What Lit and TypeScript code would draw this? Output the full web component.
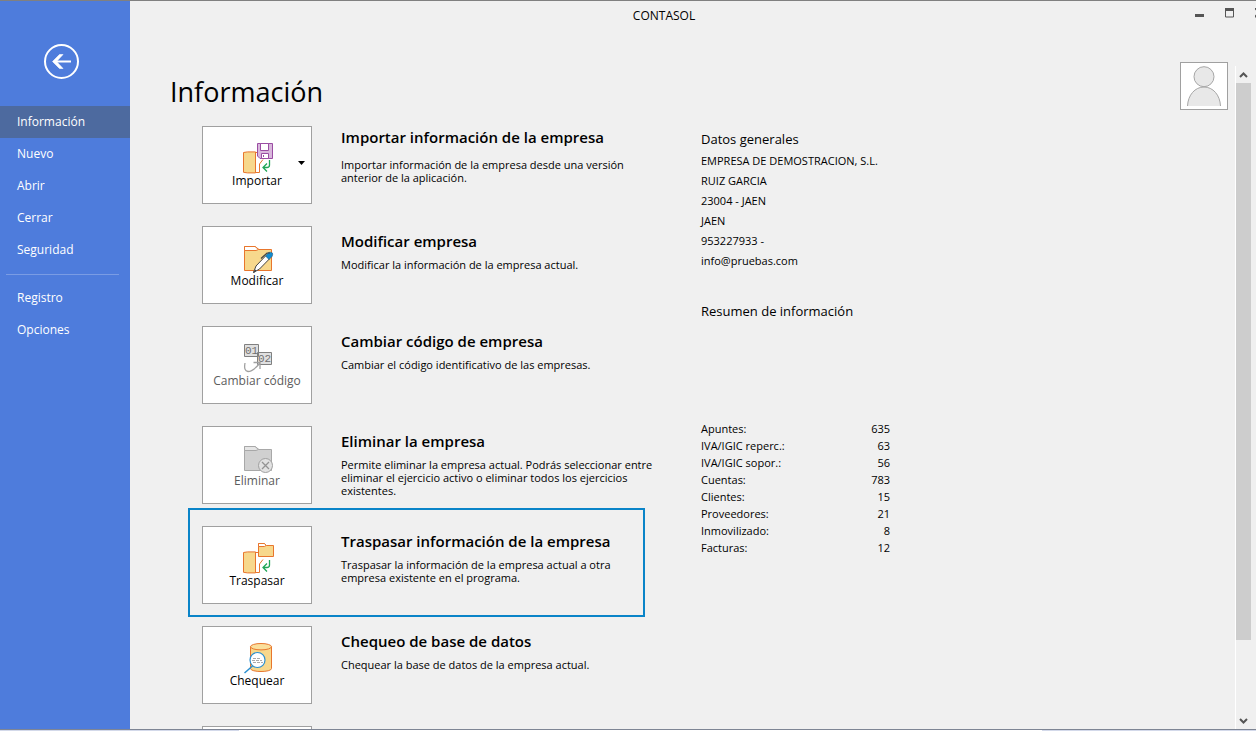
import { LitElement, html, svg, css, nothing } from "lit";
import { customElement, property } from "lit/decorators.js";

const folder = (fill: string, tab: string, line: string) => svg`
  <path d="M3.5 28.5V4.5H14l4 3h12.500v21z" fill=${fill} stroke=${line} />
  <path d="M3.500 8.500V4.500H14l3.500 3L15 8.500z" fill=${tab} stroke=${line} />`;

const book = svg`
  <path d="M14.500 10.500H18M14.500 30.500h4V22l3.500-4.500" fill="none" stroke="#e8762d" />
  <path d="M2.500 10.500l4-.6h8v21h-8l-4-.6z" fill="#f7d88c" stroke="#e8762d" />
  <path d="M28.500 18v5q0 2.500-2.500 2.500h-3.500M26 21.500l-4 4 4 4" fill="none" stroke="#21a657" stroke-width="1.300" />`;

const icons: Record<string, unknown> = {
  importar: svg`${book}
    <path d="M16.500 1.500h15v15H19l-2.500-2.500z" fill="#d9b8dc" stroke="#9a4da3" />
    <path d="M19.500 1.500h8v7h-8zM20.500 16.500v-5h7v5z" fill="#fff" stroke="#9a4da3" />
    <path d="M22.500 13v2" stroke="#9a4da3" />`,
  modificar: svg`${folder("#f7d88c", "#fff", "#e8762d")}
    <path d="M12.500 30.500l2.500-6.500L25 13.500l3.500 3.300L18.500 27z" fill="#fff" stroke="#444" />
    <path d="M24.500 14l3-3.500q2-.8 4 .5.500 2-.5 3.500l-3 3z" fill="#0f8bd0" stroke="#2c5f80" stroke-width=".6" />
    <path d="M20 16.500l6-5.500h3M12.500 30.500l2.500-2.500" fill="none" stroke="#444" stroke-width="1.200" />`,
  cambiar: svg`
    <path d="M3.500 2.500h14v12h-14zM16.500 10.500h14v12h-14z" fill="#e0e0e0" stroke="#808080" />
    <text class="digits" x="4" y="12">01</text>
    <text class="digits" x="17" y="20">02</text>
    <path d="M4 21q-1.500 8 3 8.500 5 0 11.500-8M12.500 20.500h6.500v6.500" fill="none" stroke="#a0a0a0" stroke-width="1.300" />`,
  eliminar: svg`${folder("#d0d0d0", "#e6e6e6", "#a8a8a8")}
    <circle cx="24.500" cy="23.500" r="7" fill="#e2e2e2" stroke="#a0a0a0" />
    <path d="M21 20l7 7M28 20l-7 7" stroke="#949494" stroke-width="1.300" />`,
  traspasar: svg`${book}
    <path d="M17.500 14.500v-13h6l2 2h7v11z" fill="#f7d88c" stroke="#e8762d" />
    <path d="M17.500 4.500v-3h6l1.500 2-1.500 1z" fill="#fff" stroke="#e8762d" />`,
  chequear: svg`
    <path d="M9.500 4.500v22c0 4 21 4 21 0v-22" fill="#f7d88c" stroke="#e8762d" />
    <ellipse cx="20" cy="4.700" rx="10.500" ry="3.200" fill="#fadf9c" stroke="#e8762d" />
    <path d="M11.500 24l-8 7" stroke="#2a8fd0" stroke-width="1.500" />
    <circle cx="16.500" cy="18" r="7.500" fill="#fff" stroke="#2a8fd0" stroke-width="1.200" />
    <path d="M12 16.500h8M11 18.500h10M12 20.500h10" stroke="#aaa" stroke-dasharray="3 1" />`,
};

interface Action {
  icon: string;
  label: string;
  title: string;
  text: string;
  disabled?: boolean;
  menu?: boolean;
  marked?: boolean;
}

const actions: Action[] = [
  { icon: "importar", label: "Importar", title: "Importar información de la empresa", text: "Importar información de la empresa desde una versión anterior de la aplicación.", menu: true },
  { icon: "modificar", label: "Modificar", title: "Modificar empresa", text: "Modificar la información de la empresa actual." },
  { icon: "cambiar", label: "Cambiar código", title: "Cambiar código de empresa", text: "Cambiar el código identificativo de las empresas.", disabled: true },
  { icon: "eliminar", label: "Eliminar", title: "Eliminar la empresa", text: "Permite eliminar la empresa actual. Podrás seleccionar entre eliminar el ejercicio activo o eliminar todos los ejercicios existentes.", disabled: true },
  { icon: "traspasar", label: "Traspasar", title: "Traspasar información de la empresa", text: "Traspasar la información de la empresa actual a otra empresa existente en el programa.", marked: true },
  { icon: "chequear", label: "Chequear", title: "Chequeo de base de datos", text: "Chequear la base de datos de la empresa actual." },
  { icon: "", label: "", title: "", text: "" },
];

const company = ["EMPRESA DE DEMOSTRACION, S.L.", "RUIZ GARCIA", "23004 - JAEN", "JAEN", "953227933 -", "info@pruebas.com"];

const totals: [string, number][] = [
  ["Apuntes:", 635],
  ["IVA/IGIC reperc.:", 63],
  ["IVA/IGIC sopor.:", 56],
  ["Cuentas:", 783],
  ["Clientes:", 15],
  ["Proveedores:", 21],
  ["Inmovilizado:", 8],
  ["Facturas:", 12],
];

@customElement("action-row")
export class ActionRow extends LitElement {
  @property({ attribute: false }) action!: Action;

  static styles = css`
    :host { display: block; }
    .row { position: relative; display: flex; gap: 29px; height: 78px; }
    .marked::before {
      content: ""; position: absolute; inset: -18px 9px -13px -14px;
      border: 2px solid #0a84c8; pointer-events: none;
    }
    .tile {
      box-sizing: border-box; flex: none; width: 110px; height: 78px; padding: 15px 0 0;
      position: relative; display: flex; flex-direction: column; align-items: center; justify-content: flex-start;
      background: #fff; border: 1px solid #a0a0a0; font: inherit; font-size: 12px; line-height: 16px; color: #000;
    }
    .tile:disabled { color: #5c5c5c; }
    .icon { display: block; overflow: visible; }
    .caret { position: absolute; right: 5px; top: 34px; width: 9px; height: 5px; }
    .digits { font: 11px "Liberation Mono", monospace; fill: #707070; }
    .copy { flex: 1; padding-top: 5px; }
    .title { margin: 0 0 7px; font-size: 15px; line-height: 20px; font-weight: 600; }
    .first .copy { padding-top: 1px; }
    .first .title { margin-bottom: 11px; }
    .text { margin: 0; font-size: 11px; line-height: 13px; }
  `;

  render() {
    const a = this.action;
    return html`
      <div class="row ${a.marked ? "marked" : ""} ${a.menu ? "first" : ""}">
        <button class="tile" ?disabled=${a.disabled}>
          ${a.icon ? html`<svg class="icon" viewBox="-1 0 34 31" width="34" height="31">${icons[a.icon]}</svg>` : nothing}
          ${a.label}
          ${a.menu ? html`<svg class="caret" viewBox="0 0 9 5"><path d="M1 0h7L4.500 4z" /></svg>` : nothing}
        </button>
        <div class="copy">
          ${a.title ? html`<h2 class="title">${a.title}</h2><p class="text">${a.text}</p>` : nothing}
        </div>
      </div>`;
  }
}

@customElement("app-root")
export class AppRoot extends LitElement {
  static styles = css`
    :host { display: block; font-family: "Open Sans", "Noto Sans", sans-serif; color: #000; }
    .window {
      box-sizing: border-box; height: 100vh; display: grid; grid-template: minmax(0, 1fr) 2px / 130px minmax(0, 1fr);
      background: #f0f0f0; border-top: 1px solid #808080; overflow: hidden;
    }
    .side { background: #4e7cdc; padding-top: 43px; font-size: 12px; line-height: 32px; }
    .back { display: block; width: 36px; height: 36px; margin: 0 0 26px 43px; padding: 0; border: 0; background: none; }
    .back svg { display: block; }
    .link { display: block; padding-left: 17px; color: #fff; text-decoration: none; }
    .active { background: #4d6a9f; }
    .rule { margin: 8px 11px 7px 6px; border: 0; border-top: 1px solid #7a9ce4; }
    .main { display: flex; flex-direction: column; overflow: hidden; }
    .bar { display: flex; height: 30px; flex: none; }
    .name { flex: 1; padding-left: 13px; text-align: center; font-size: 12px; line-height: 29px; }
    .controls { display: flex; width: 71px; overflow: hidden; }
    .control { flex: none; width: 30px; height: 24px; padding: 0; border: 0; background: none; }
    .control svg { display: block; margin: auto; }
    .body { flex: 1; min-height: 0; display: flex; padding-right: 5px; }
    .content { flex: 1; min-width: 0; padding: 31px 7px 0 40px; display: flex; overflow: hidden; }
    .sheet { flex: 1; min-width: 0; }
    .heading { margin: 11px 0 16px; font-size: 27px; line-height: 37px; font-weight: 400; }
    .columns { display: grid; grid-template-columns: 452px 189px; column-gap: 47px; padding-left: 32px; }
    .actions { display: flex; flex-direction: column; gap: 22px; }
    .subhead { margin: 0; font-size: 13px; line-height: 20px; font-weight: 400; }
    .facts { padding-top: 3px; font-size: 11px; }
    .line { margin: 0; line-height: 20px; }
    .lines { padding: 2px 0 30px; }
    .totals { width: 100%; margin-top: 99px; border-collapse: collapse; line-height: 17px; }
    .totals th { padding: 0; font-weight: 400; text-align: left; }
    .totals td { padding: 0; text-align: right; }
    .avatar { box-sizing: border-box; flex: none; width: 48px; height: 48px; border: 1px solid #a0a0a0; background: #fff; }
    .avatar svg { display: block; }
    .scroll { box-sizing: border-box; width: 16px; margin-top: 35px; border-left: 1px solid #fff; display: flex; flex-direction: column; }
    .step { height: 17px; width: 15px; padding: 0; border: 0; background: none; }
    .step svg { display: block; margin: auto; }
    .track { flex: 1; }
    .thumb { height: 88.500%; background: #cdcdcd; }
    .foot { grid-column: 1 / -1; border-top: 1px solid #7e8594; background: linear-gradient(90deg, #d3d9ea 19%, #fff 19%, #fff 83%, #d3d9ea 83%) padding-box; }
  `;

  render() {
    const link = (t: string, active = false) => html`<a class="link ${active ? "active" : ""}" href="#">${t}</a>`;
    return html`
      <div class="window">
        <nav class="side">
          <button class="back" aria-label="Volver">
            <svg width="36" height="36" viewBox="0 0 36 36" fill="none" stroke="#fff">
              <circle cx="18.500" cy="17.500" r="16.500" stroke-width="2" />
              <path d="M11 17.500h17" stroke-width="2" />
              <path d="M20 10.500h-3.500L9.500 17.500l7 7H20l-6.500-7z" fill="#fff" stroke="#fff" stroke-width=".6" />
            </svg>
          </button>
          ${link("Información", true)} ${link("Nuevo")} ${link("Abrir")} ${link("Cerrar")} ${link("Seguridad")}
          <hr class="rule" />
          ${link("Registro")} ${link("Opciones")}
        </nav>
        <main class="main">
          <header class="bar">
            <div class="name">CONTASOL</div>
            <div class="controls">
              <button class="control" aria-label="Minimizar"><svg width="10" height="10"><path d="M0 6h9v3H0z" fill="#555" /></svg></button>
              <button class="control" aria-label="Maximizar"><svg width="10" height="10"><path d="M.5 1v8h8V1zM0 2h9" fill="none" stroke="#555" /><path d="M0 0h9v3H0z" fill="#555" /></svg></button>
              <button class="control" aria-label="Cerrar"><svg width="10" height="10"><path d="M0 0l9 9M9 0L0 9" stroke="#555" stroke-width="2" /></svg></button>
            </div>
          </header>
          <div class="body">
            <div class="content">
              <div class="sheet">
                <h1 class="heading">Información</h1>
                <div class="columns">
                  <div class="actions">${actions.map((a) => html`<action-row .action=${a}></action-row>`)}</div>
                  <section class="facts">
                    <h2 class="subhead">Datos generales</h2>
                    <div class="lines">${company.map((t) => html`<p class="line">${t}</p>`)}</div>
                    <h2 class="subhead">Resumen de información</h2>
                    <table class="totals">
                      ${totals.map(([k, v]) => html`<tr><th scope="row">${k}</th><td>${v}</td></tr>`)}
                    </table>
                  </section>
                </div>
              </div>
              <div class="avatar">
                <svg width="46" height="46" viewBox="1 1 46 46" fill="#e8e8e8" stroke="#a6a6a6">
                  <path d="M7.500 44C8 33 15 25 24 25s16 8 16.500 19" />
                  <circle cx="24" cy="14.700" r="10" />
                </svg>
              </div>
            </div>
            <div class="scroll">
              <button class="step" aria-label="Subir"><svg width="9" height="8"><path d="M1 6l3.500-3.500L8 6" fill="none" stroke="#555" stroke-width="2" /></svg></button>
              <div class="track"><div class="thumb"></div></div>
              <button class="step" aria-label="Bajar"><svg width="9" height="8"><path d="M1 2l3.500 3.500L8 2" fill="none" stroke="#555" stroke-width="2" /></svg></button>
            </div>
          </div>
        </main>
        <div class="foot"></div>
      </div>`;
  }
}
